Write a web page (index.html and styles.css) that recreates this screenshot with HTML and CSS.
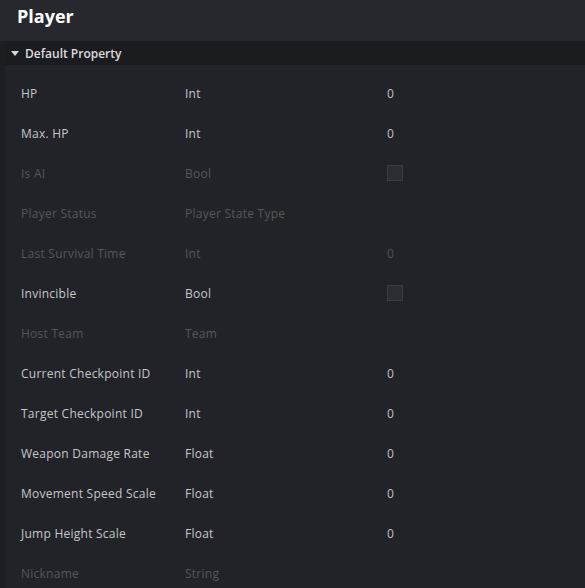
FILE: index.html
```html
<!DOCTYPE html>
<html>
<head>
<meta charset="utf-8">
<link rel="stylesheet" href="styles.css">
</head>
<body>
<div class="panel">
  <div class="title">Player</div>
  <div class="body">
    <div class="side"></div>
    <div class="main">
      <div class="section-head"><span class="caret"></span>Default Property</div>
      <div class="rows">
        <div class="row"><span class="name">HP</span><span class="type">Int</span><span class="val">0</span></div>
        <div class="row"><span class="name">Max. HP</span><span class="type">Int</span><span class="val">0</span></div>
        <div class="row dis"><span class="name">Is AI</span><span class="type">Bool</span><span class="val"><span class="check"></span></span></div>
        <div class="row dis"><span class="name">Player Status</span><span class="type">Player State Type</span><span class="val"></span></div>
        <div class="row dis"><span class="name">Last Survival Time</span><span class="type">Int</span><span class="val">0</span></div>
        <div class="row"><span class="name">Invincible</span><span class="type">Bool</span><span class="val"><span class="check"></span></span></div>
        <div class="row dis"><span class="name">Host Team</span><span class="type">Team</span><span class="val"></span></div>
        <div class="row"><span class="name">Current Checkpoint ID</span><span class="type">Int</span><span class="val">0</span></div>
        <div class="row"><span class="name">Target Checkpoint ID</span><span class="type">Int</span><span class="val">0</span></div>
        <div class="row"><span class="name">Weapon Damage Rate</span><span class="type">Float</span><span class="val">0</span></div>
        <div class="row"><span class="name">Movement Speed Scale</span><span class="type">Float</span><span class="val">0</span></div>
        <div class="row"><span class="name">Jump Height Scale</span><span class="type">Float</span><span class="val">0</span></div>
        <div class="row dis"><span class="name">Nickname</span><span class="type">String</span><span class="val"></span></div>
      </div>
    </div>
  </div>
</div>
</body>
</html>
```

FILE: styles.css
```css
html, body {
  margin: 0;
  padding: 0;
  background: #222328;
  font-family: "Open Sans", "Noto Sans", sans-serif;
  overflow: hidden;
}
.panel {
  width: 585px;
  height: 588px;
  display: flex;
  flex-direction: column;
}
.title {
  height: 41px;
  box-sizing: border-box;
  background: #27282d;
  color: #ffffff;
  font-weight: 700;
  font-size: 18px;
  line-height: 32px;
  padding-left: 17px;
  flex-shrink: 0;
}
.body {
  display: flex;
  flex: 1;
}
.side {
  width: 5px;
  background: #1d1e22;
  flex-shrink: 0;
}
.main {
  flex: 1;
}
.section-head {
  height: 24px;
  background: #1b1c20;
  color: #dcdcdc;
  font-size: 12px;
  font-weight: 600;
  line-height: 24px;
  display: flex;
  align-items: center;
  padding-left: 6px;
  padding-top: 1px;
  box-sizing: border-box;
}
.caret {
  width: 0;
  height: 0;
  border-left: 4px solid transparent;
  border-right: 4px solid transparent;
  border-top: 5px solid #d8d8d8;
  margin-right: 6px;
}
.rows {
  padding-top: 8px;
}
.row {
  height: 40px;
  display: flex;
  align-items: center;
  font-size: 12px;
  letter-spacing: 0.25px;
  color: #c6c6c8;
}
.row.dis {
  color: #55565b;
}
.name {
  width: 164px;
  padding-left: 16px;
  flex-shrink: 0;
}
.type {
  width: 202px;
  flex-shrink: 0;
}
.val {
  display: flex;
  align-items: center;
}
.check {
  width: 14px;
  height: 14px;
  background: #2c2d32;
  border: 1px solid #3c3d42;
  display: block;
}
.row .val { color: #c0c0c2; }
.row.dis .val { color: #4f5055; }
```
